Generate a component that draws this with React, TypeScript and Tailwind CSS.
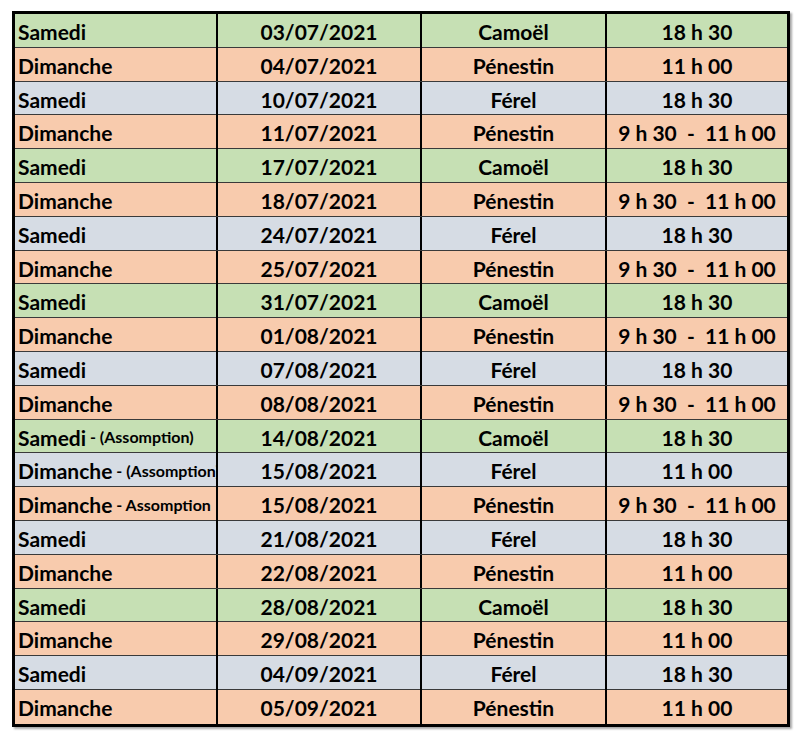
type Row = {
  day: string;
  note?: string;
  date: string;
  place: string;
  time: string;
};

const rows: Row[] = [
  { day: "Samedi", date: "03/07/2021", place: "Camoël", time: "18 h 30" },
  { day: "Dimanche", date: "04/07/2021", place: "Pénestin", time: "11 h 00" },
  { day: "Samedi", date: "10/07/2021", place: "Férel", time: "18 h 30" },
  { day: "Dimanche", date: "11/07/2021", place: "Pénestin", time: "9 h 30  -  11 h 00" },
  { day: "Samedi", date: "17/07/2021", place: "Camoël", time: "18 h 30" },
  { day: "Dimanche", date: "18/07/2021", place: "Pénestin", time: "9 h 30  -  11 h 00" },
  { day: "Samedi", date: "24/07/2021", place: "Férel", time: "18 h 30" },
  { day: "Dimanche", date: "25/07/2021", place: "Pénestin", time: "9 h 30  -  11 h 00" },
  { day: "Samedi", date: "31/07/2021", place: "Camoël", time: "18 h 30" },
  { day: "Dimanche", date: "01/08/2021", place: "Pénestin", time: "9 h 30  -  11 h 00" },
  { day: "Samedi", date: "07/08/2021", place: "Férel", time: "18 h 30" },
  { day: "Dimanche", date: "08/08/2021", place: "Pénestin", time: "9 h 30  -  11 h 00" },
  { day: "Samedi", note: " - (Assomption)", date: "14/08/2021", place: "Camoël", time: "18 h 30" },
  { day: "Dimanche", note: " - (Assomption)", date: "15/08/2021", place: "Férel", time: "11 h 00" },
  { day: "Dimanche", note: " - Assomption", date: "15/08/2021", place: "Pénestin", time: "9 h 30  -  11 h 00" },
  { day: "Samedi", date: "21/08/2021", place: "Férel", time: "18 h 30" },
  { day: "Dimanche", date: "22/08/2021", place: "Pénestin", time: "11 h 00" },
  { day: "Samedi", date: "28/08/2021", place: "Camoël", time: "18 h 30" },
  { day: "Dimanche", date: "29/08/2021", place: "Pénestin", time: "11 h 00" },
  { day: "Samedi", date: "04/09/2021", place: "Férel", time: "18 h 30" },
  { day: "Dimanche", date: "05/09/2021", place: "Pénestin", time: "11 h 00" },
];

const rowBg = (place: string) => {
  if (place === "Camoël") return "bg-[#c6e0b4]";
  if (place === "Férel") return "bg-[#d6dce4]";
  return "bg-[#f8cbad]";
};

const App = () => {
  return (
    <div className="min-h-screen bg-white pl-[12px] pt-[11px] font-['Lato',_'Open_Sans',_sans-serif] font-bold text-[21px] text-black">
      <div className="w-[778px] border-[3px] border-black shadow-[2px_2px_2px_rgba(0,0,0,0.35)]">
        {rows.map((r, i) => (
          <div
            key={i}
            className={`grid grid-cols-[201px_204px_185px_182px] h-[33.8px] ${rowBg(r.place)} ${
              i < rows.length - 1 ? "border-b border-[#3a3a3a]" : ""
            }`}
          >
            <div className="flex items-center pl-[3px] pt-[2px] overflow-hidden whitespace-nowrap">
              {r.day}
              {r.note && <span className="text-[16px] whitespace-pre">{r.note}</span>}
            </div>
            <div className="flex items-center justify-center pt-[2px] border-l-2 border-black">
              {r.date}
            </div>
            <div className="flex items-center justify-center pt-[2px] border-l-2 border-black">
              {r.place}
            </div>
            <div className="flex items-center justify-center pt-[2px] border-l-2 border-black whitespace-pre">
              {r.time}
            </div>
          </div>
        ))}
      </div>
    </div>
  );
};

export default App;
